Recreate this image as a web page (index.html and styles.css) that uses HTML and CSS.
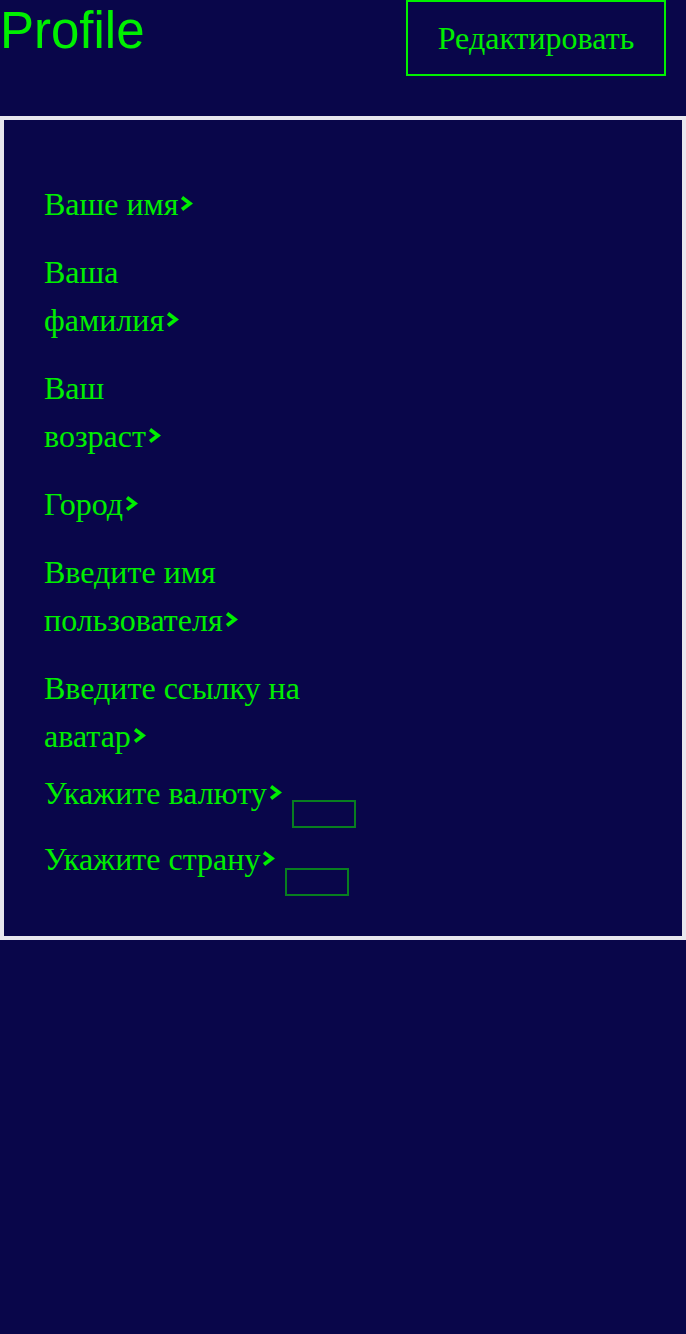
FILE: index.html
```html
<!DOCTYPE html>
<html lang="ru">
<head>
<meta charset="utf-8">
<title>Profile</title>
<link rel="stylesheet" href="styles.css">
</head>
<body>
<header class="header">
  <h1 class="title">Profile</h1>
  <button class="edit-btn">Редактировать</button>
</header>
<section class="card">
  <div class="item">Ваше имя<svg class="chev" viewBox="0 0 13 17"><polyline points="2,2.5 10,8.5 2,14.5"/></svg></div>
  <div class="item">Ваша<br>фамилия<svg class="chev" viewBox="0 0 13 17"><polyline points="2,2.5 10,8.5 2,14.5"/></svg></div>
  <div class="item">Ваш<br>возраст<svg class="chev" viewBox="0 0 13 17"><polyline points="2,2.5 10,8.5 2,14.5"/></svg></div>
  <div class="item">Город<svg class="chev" viewBox="0 0 13 17"><polyline points="2,2.5 10,8.5 2,14.5"/></svg></div>
  <div class="item">Введите имя<br>пользователя<svg class="chev" viewBox="0 0 13 17"><polyline points="2,2.5 10,8.5 2,14.5"/></svg></div>
  <div class="item">Введите ссылку на<br>аватар<svg class="chev" viewBox="0 0 13 17"><polyline points="2,2.5 10,8.5 2,14.5"/></svg></div>
  <div class="select-row row-currency">
    <span class="item-label">Укажите валюту<svg class="chev" viewBox="0 0 13 17"><polyline points="2,2.5 10,8.5 2,14.5"/></svg></span>
    <span class="box"></span>
  </div>
  <div class="select-row row-country">
    <span class="item-label">Укажите страну<svg class="chev" viewBox="0 0 13 17"><polyline points="2,2.5 10,8.5 2,14.5"/></svg></span>
    <span class="box"></span>
  </div>
</section>
</body>
</html>
```
FILE: styles.css
```css
html, body {
  margin: 0;
  padding: 0;
  background: #09064a;
}
body {
  min-height: 1334px;
  color: #00ee00;
  font-family: "Liberation Serif", "Times New Roman", serif;
}
.header {
  display: flex;
  justify-content: space-between;
  align-items: flex-start;
  height: 116px;
  padding-right: 20px;
}
.title {
  margin: 0;
  font-family: "Liberation Sans", Arial, sans-serif;
  font-weight: 400;
  font-size: 51px;
  line-height: 62px;
  color: #00f000;
}
.edit-btn {
  width: 260px;
  height: 76px;
  box-sizing: border-box;
  background: transparent;
  border: 2px solid #00f000;
  color: #00ee00;
  font-family: "Liberation Serif", "Times New Roman", serif;
  font-size: 32px;
  padding: 0;
  cursor: pointer;
}
.card {
  border: 4px solid #e8e7ee;
  padding: 60px 40px 40px;
  display: flex;
  flex-direction: column;
  align-items: flex-start;
}
.item, .item-label {
  font-size: 32px;
  line-height: 48px;
  color: #00ee00;
}
.item + .item {
  margin-top: 20px;
}
.chev {
  width: 13px;
  height: 17px;
  margin-left: 2px;
  vertical-align: 3px;
  fill: none;
  stroke: #00ee00;
  stroke-width: 3.6;
  stroke-linecap: butt;
  stroke-linejoin: miter;
}
.select-row {
  display: flex;
  align-items: flex-start;
}
.row-currency {
  margin-top: 9px;
}
.row-country {
  margin-top: 7px;
}
.box {
  display: block;
  width: 64px;
  height: 28px;
  box-sizing: border-box;
  border: 2px solid #087f20;
  margin-left: 10px;
}
.row-currency .box {
  margin-top: 31px;
}
.row-country .box {
  margin-top: 33px;
}
```
